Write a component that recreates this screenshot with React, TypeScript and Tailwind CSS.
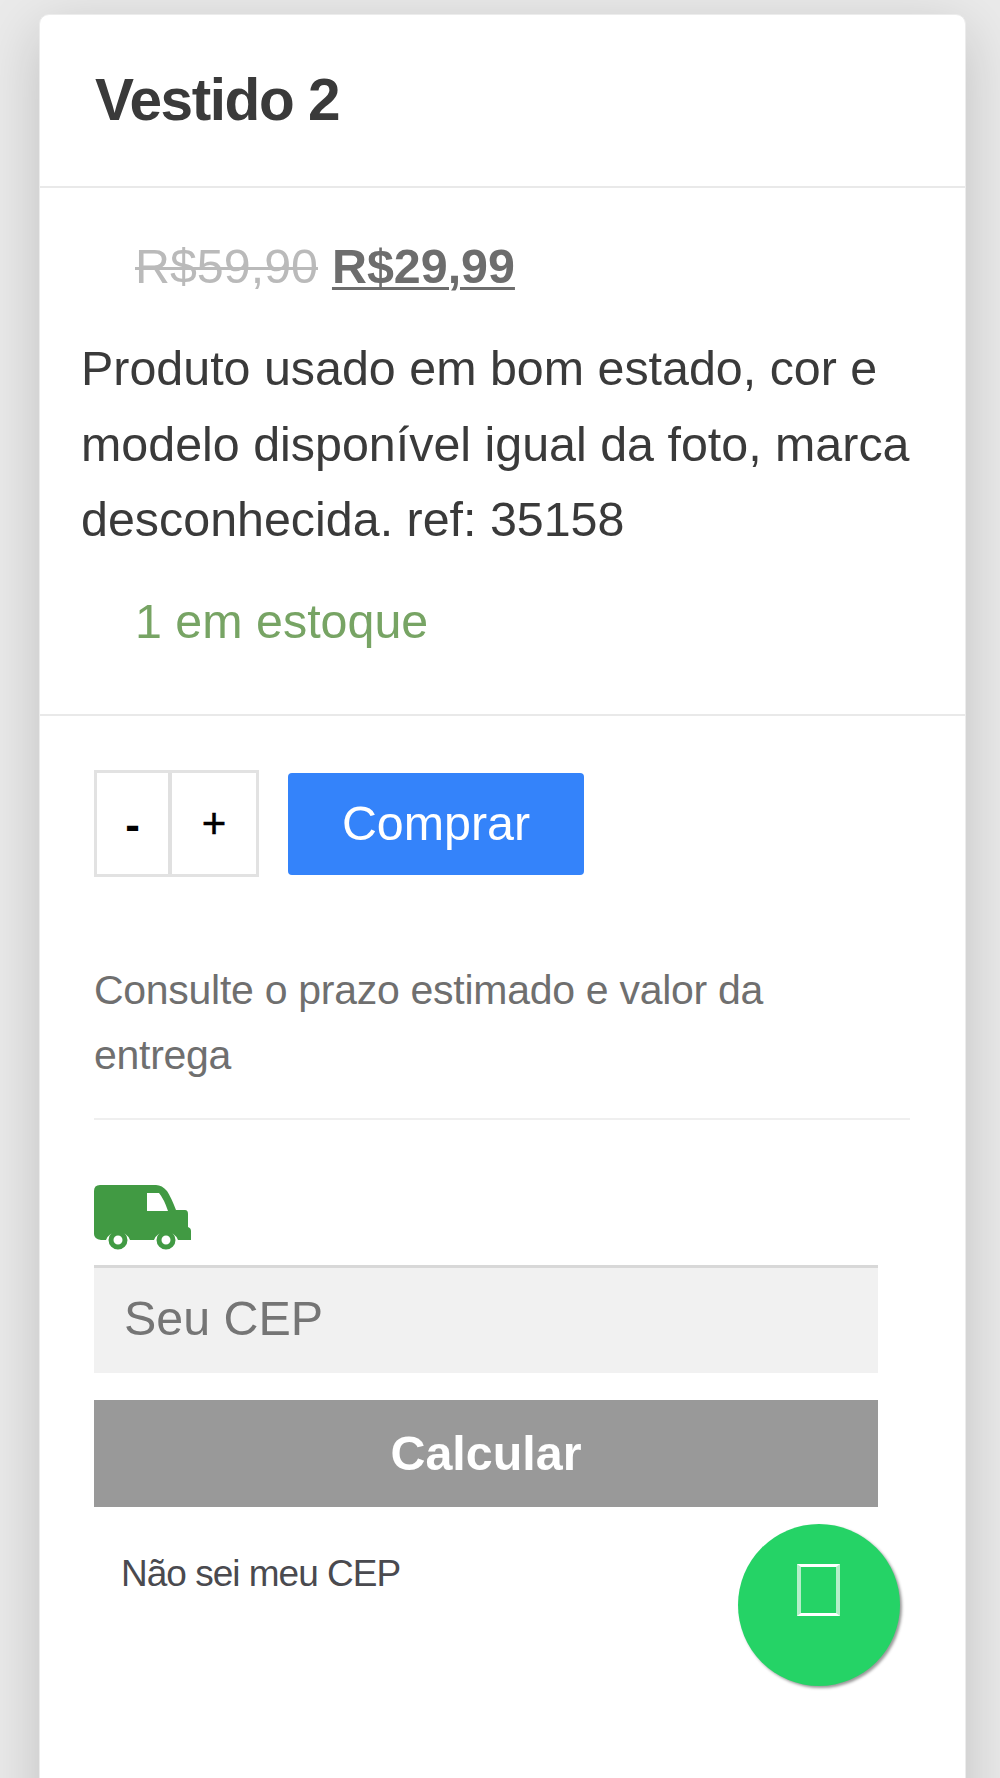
const VanIcon = () => (
  <svg viewBox="0 0 97 65" className="block w-[97px] h-[65px]">
    <path
      fill="#419a43"
      fillRule="evenodd"
      d="M6 0H62Q68 0 73 6Q77 12 82 25H91Q94 25 94 29V42Q97 43 97 46V55H84A13 13 0 0 0 60 55H36A13 13 0 0 0 12 55H7Q0 54 0 49V6Q0 0 6 0ZM53 8V26H74Q70 14 65 8Z"
    />
    <circle cx="24" cy="55" r="7" fill="white" stroke="#419a43" strokeWidth="5" />
    <circle cx="72" cy="55" r="7" fill="white" stroke="#419a43" strokeWidth="5" />
  </svg>
);

const App: React.FC = () => {
  return (
    <div className="relative h-[1778px] overflow-hidden bg-[#eaeaea] pt-[14px] pl-[39px] font-['Liberation_Sans',Arial,sans-serif]">
      <div className="h-[1900px] w-[927px] rounded-[10px] border border-[#ececec] bg-white shadow-[0_16px_60px_rgba(0,0,0,0.18)]">
        {/* Title */}
        <header className="h-[173px] border-b-2 border-[#e9e9e9] pl-[55px] pt-[50px]">
          <h1 className="text-[58.5px] leading-[70px] font-bold tracking-[-1.4px] text-[#3a3a3a]">Vestido 2</h1>
        </header>

        {/* Price, description and stock */}
        <section className="h-[528px] border-b-2 border-[#e9e9e9] pl-[41px] pt-[41px] text-[48.4px] leading-[75.4px] text-[#3a3a3a]">
          <p className="flex gap-[14px] pl-[54px]">
            <del className="text-[#bababa] decoration-[3px]">R$59,90</del>
            <ins className="font-bold text-[#6d6d6d] decoration-[3px] underline-offset-[4px]">R$29,99</ins>
          </p>
          <p className="mt-[27px] whitespace-nowrap">
            Produto usado em bom estado, cor e<br />
            modelo disponível igual da foto, marca<br />
            desconhecida. ref: 35158
          </p>
          <p className="mt-[26px] pl-[54px] text-[#77a464]">1 em estoque</p>
        </section>

        <section className="pl-[54px] pt-[54px]">
          <div className="flex items-center">
            <div className="flex h-[107px] w-[165px] border-[3px] border-[#e2e2e2] text-black">
              <button className="w-[75px] border-r-[4px] border-[#e0e0e0] pt-[3px] text-[44px] font-bold">-</button>
              <button className="flex-1 text-[42px] [-webkit-text-stroke:0.5px_black]">+</button>
            </div>
            <button className="ml-[29px] h-[102px] w-[296px] rounded-[4px] bg-[#3483fa] pb-px text-[48.4px] text-white">
              Comprar
            </button>
          </div>

          {/* Shipping */}
          <p className="mt-[81px] w-[816px] border-b-2 border-[#efefef] pb-[30px] text-[41px] leading-[65px] tracking-[-0.28px] text-[#6f6f6f]">
            Consulte o prazo estimado e valor da<br />
            entrega
          </p>
          <div className="mt-[65px]">
            <VanIcon />
          </div>
          <input
            placeholder="Seu CEP"
            className="mt-[15px] block h-[108px] w-[784px] border-t-[3px] border-[#d8d8d8] bg-[#f1f1f1] pb-[5px] pl-[30px] text-[48.4px] placeholder:text-[#757575]"
          />
          <button className="mt-[27px] block h-[107px] w-[784px] bg-[#999999] pb-px text-[48.4px] font-bold text-white">
            Calcular
          </button>
          <p className="mt-[44px] pl-[27px] text-[37px] leading-[46px] tracking-[-1px] text-[#4a4a4f]">Não sei meu CEP</p>
        </section>
      </div>

      {/* Floating chat button */}
      <button className="absolute left-[738px] top-[1524px] flex h-[162px] w-[162px] justify-center rounded-full bg-[#25d366] pt-[40px] shadow-[2px_2px_3px_#999]">
        <span className="mr-px h-[52px] w-[43px] border-x-[4px] border-y-[3px] border-x-[#b5efc9] border-y-white" />
      </button>
    </div>
  );
};

export default App;
